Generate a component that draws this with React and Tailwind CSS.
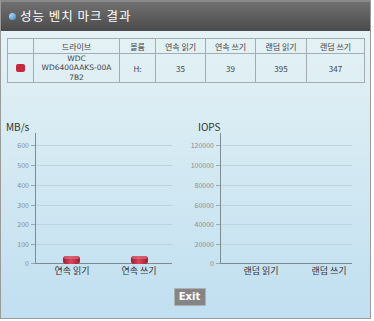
import React from "react";

const font = { fontFamily: '"Noto Sans CJK KR", "Noto Sans", sans-serif' };

function Chart({ label, labelX, axisX, gridEnd, tickLabels, bars, xLabels }) {
  const gy = [28, 48, 68, 88, 107, 127, 146];
  return (
    <svg width="184" height="162" className="block" style={font}>
      <defs>
        <linearGradient id="barg" x1="0" x2="1" y1="0" y2="0">
          <stop offset="0" stopColor="#9e1a30" />
          <stop offset="0.45" stopColor="#d8485c" />
          <stop offset="1" stopColor="#a21c32" />
        </linearGradient>
      </defs>
      <text x={labelX} y="14" fontSize="10" fill="#333">{label}</text>
      {gy.slice(0, 6).map((y, i) => (
        <line key={i} x1={axisX} x2={gridEnd} y1={y + 0.5} y2={y + 0.5} stroke="#bcd5dd" strokeWidth="1" />
      ))}
      {gy.map((y, i) => (
        <g key={"t" + i}>
          <line x1={axisX - 4} x2={axisX} y1={y + 0.5} y2={y + 0.5} stroke="#9aa" strokeWidth="1" />
          <text x={axisX - 6} y={y + 3} fontSize="7" fill="#8a8f92" textAnchor="end">{tickLabels[i]}</text>
        </g>
      ))}
      <line x1={axisX + 0.5} x2={axisX + 0.5} y1="16" y2="146.5" stroke="#7d8c92" strokeWidth="1" />
      <line x1={axisX} x2={gridEnd} y1="146.5" y2="146.5" stroke="#7d8c92" strokeWidth="1" />
      {bars.map((b, i) => (
        <g key={"b" + i}>
          <rect x={b} y="139" width="17" height="8" rx="3" fill="url(#barg)" />
          <rect x={b + 1} y="139" width="15" height="3" rx="1.5" fill="#e06a7a" opacity="0.7" />
        </g>
      ))}
      {xLabels.map((l, i) => (
        <text key={"x" + i} x={l.x} y="157" fontSize="9" fill="#333" textAnchor="middle">{l.t}</text>
      ))}
    </svg>
  );
}

export default function App() {
  const th = "border border-[#a3adb0] font-normal h-[15px] p-0";
  const td = "border border-[#a3adb0] p-0";
  return (
    <div className="w-[374px] h-[321px] bg-white" style={font}>
      <div className="w-[371px] h-[319px] border border-[#9a9a9a] border-t-0 flex flex-col bg-gradient-to-b from-[#e8f4f5] to-[#c0dff0]">
        <div className="h-[31px] shrink-0 border-t-2 border-t-[#8a8a8a] bg-gradient-to-b from-[#707070] via-[#5e5e5e] to-[#4a4a4a] flex items-center pl-[8px] gap-[4px]">
          <div className="w-[7px] h-[7px] rounded-full bg-gradient-to-br from-[#bfe8ff] to-[#2d8ccc]" />
          <span className="text-white text-[12.5px] tracking-[1px] leading-none">성능 벤치 마크 결과</span>
        </div>
        <div className="pl-[6px] pt-[7px]">
          <table className="border-collapse text-[8px] text-[#444] text-center leading-[9px]">
            <thead>
              <tr>
                <th className={th + " w-[26px]"}></th>
                <th className={th + " w-[86px]"}>드라이브</th>
                <th className={th + " w-[36px]"}>볼륨</th>
                <th className={th + " w-[50px]"}>연속 읽기</th>
                <th className={th + " w-[50px]"}>연속 쓰기</th>
                <th className={th + " w-[51px]"}>랜덤 읽기</th>
                <th className={th + " w-[58px]"}>랜덤 쓰기</th>
              </tr>
            </thead>
            <tbody>
              <tr className="h-[29px]">
                <td className={td}>
                  <div className="w-[9px] h-[8px] rounded-[2px] bg-[#c8283e] mx-auto" />
                </td>
                <td className={td + " text-[7.5px] leading-[9.2px] font-['DejaVu_Sans',sans-serif]"}>
                  <div>WDC</div>
                  <div>WD6400AAKS-00A</div>
                  <div>7B2</div>
                </td>
                <td className={td}>H:</td>
                <td className={td}>35</td>
                <td className={td}>39</td>
                <td className={td}>395</td>
                <td className={td}>347</td>
              </tr>
            </tbody>
          </table>
        </div>
        <div className="flex mt-[34px]">
          <Chart
            label="MB/s"
            labelX={5}
            axisX={34}
            gridEnd={171}
            tickLabels={["600", "500", "400", "300", "200", "100", "0"]}
            bars={[62, 130]}
            xLabels={[{ x: 71, t: "연속 읽기" }, { x: 138, t: "연속 쓰기" }]}
          />
          <Chart
            label="IOPS"
            labelX={13}
            axisX={35}
            gridEnd={167}
            tickLabels={["120000", "100000", "80000", "60000", "40000", "20000", "0"]}
            bars={[]}
            xLabels={[{ x: 76, t: "랜덤 읽기" }, { x: 144, t: "랜덤 쓰기" }]}
          />
        </div>
        <div className="flex justify-center mt-[9px] pl-[8px]">
          <button className="w-[32px] h-[18px] bg-[#858585] border border-[#b0b0b0] text-white text-[10px] font-bold leading-none" style={{ fontFamily: '"DejaVu Sans", sans-serif' }}>
            Exit
          </button>
        </div>
      </div>
    </div>
  );
}
